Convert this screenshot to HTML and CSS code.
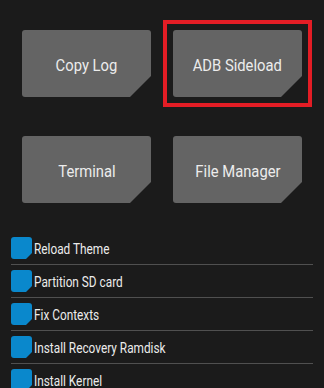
FILE: index.html
```html
<!DOCTYPE html>
<html lang="en">
<head>
  <meta charset="UTF-8">
  <meta name="viewport" content="width=device-width, initial-scale=1.0">
  <title>Advanced</title>
  <link rel="stylesheet" href="styles.css">
</head>
<body>
  <div class="actions">
    <div class="tile"><span class="label">Copy Log</span></div>
    <div class="focus">
      <div class="tile"><span class="label">ADB Sideload</span></div>
    </div>
    <div class="tile"><span class="label">Terminal</span></div>
    <div class="tile"><span class="label">File Manager</span></div>
  </div>

  <ul class="menu">
    <li><span class="check"></span><span class="text">Reload Theme</span></li>
    <li><span class="check"></span><span class="text">Partition SD card</span></li>
    <li><span class="check"></span><span class="text">Fix Contexts</span></li>
    <li><span class="check"></span><span class="text">Install Recovery Ramdisk</span></li>
    <li><span class="check"></span><span class="text">Install Kernel</span></li>
  </ul>
</body>
</html>
```

FILE: styles.css
```css
* {
  box-sizing: border-box;
  margin: 0;
  padding: 0;
}

body {
  font-family: 'Roboto', 'Liberation Sans', sans-serif;
  background-color: #1b1b1b;
  color: #ececec;
  width: 324px;
  height: 388px;
  overflow: hidden;
}

.actions {
  display: grid;
  grid-template-columns: 129px 129px;
  grid-auto-rows: 67px;
  column-gap: 22px;
  row-gap: 39px;
  padding: 30px 0 0 22px;
}

.tile {
  width: 129px;
  height: 67px;
  background-color: #646464;
  border-radius: 3px;
  clip-path: polygon(0 0, 100% 0, 100% calc(100% - 21px), calc(100% - 21px) 100%, 0 100%);
  display: flex;
  align-items: center;
  justify-content: center;
  padding-top: 3px;
}

.label {
  display: inline-block;
  font-size: 17px;
  white-space: nowrap;
  transform: scaleX(0.87);
}

.focus {
  outline: 4px solid #e41d25;
  outline-offset: 6px;
}

.menu {
  list-style: none;
  margin: 29px 11px 0;
}

.menu li {
  display: flex;
  align-items: center;
  height: 33px;
  padding: 5px 0;
  border-bottom: 1px solid #505050;
}

.check {
  flex: none;
  width: 21px;
  height: 22px;
  background-color: #0a88cc;
  border-radius: 3px;
  clip-path: polygon(0 0, 100% 0, 100% calc(100% - 6px), calc(100% - 6px) 100%, 0 100%);
  margin-right: 2px;
}

.text {
  display: inline-block;
  font-size: 14px;
  white-space: nowrap;
  transform: scaleX(0.845);
  transform-origin: left center;
  padding-top: 1px;
}
```
